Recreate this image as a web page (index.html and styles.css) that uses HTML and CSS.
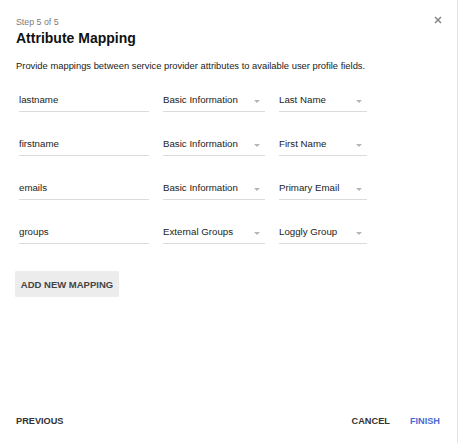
FILE: index.html
```html
<!DOCTYPE html>
<html>
<head>
<meta charset="utf-8">
<link rel="stylesheet" href="styles.css">
</head>
<body>
<div class="dialog">
  <div class="header">
    <div class="step">Step 5 of 5</div>
    <h1 class="title">Attribute Mapping</h1>
    <button class="close" aria-label="Close">
      <svg width="8" height="8" viewBox="0 0 8 8"><path d="M1 1L7 7M7 1L1 7" stroke="#858585" stroke-width="1.5" fill="none"/></svg>
    </button>
  </div>
  <p class="desc">Provide mappings between service provider attributes to available user profile fields.</p>
  <div class="rows">
    <div class="row">
      <div class="field input">lastname</div>
      <div class="field select s1">Basic Information<span class="arrow"></span></div>
      <div class="field select s2">Last Name<span class="arrow"></span></div>
    </div>
    <div class="row">
      <div class="field input">firstname</div>
      <div class="field select s1">Basic Information<span class="arrow"></span></div>
      <div class="field select s2">First Name<span class="arrow"></span></div>
    </div>
    <div class="row">
      <div class="field input">emails</div>
      <div class="field select s1">Basic Information<span class="arrow"></span></div>
      <div class="field select s2">Primary Email<span class="arrow"></span></div>
    </div>
    <div class="row">
      <div class="field input">groups</div>
      <div class="field select s1">External Groups<span class="arrow"></span></div>
      <div class="field select s2">Loggly Group<span class="arrow"></span></div>
    </div>
  </div>
  <button class="add">ADD NEW MAPPING</button>
  <div class="spacer"></div>
  <div class="footer">
    <button class="flat">PREVIOUS</button>
    <div class="right">
      <button class="flat">CANCEL</button>
      <button class="flat primary">FINISH</button>
    </div>
  </div>
</div>
</body>
</html>
```

FILE: styles.css
```css
html, body {
  margin: 0;
  padding: 0;
  background: #ffffff;
}
body {
  font-family: "Liberation Sans", Arial, sans-serif;
  color: #222;
}
.dialog {
  width: 457px;
  height: 443px;
  border-right: 1px solid #e2e2e2;
  display: flex;
  flex-direction: column;
  box-sizing: content-box;
}
.header {
  position: relative;
  padding: 16px 16px 0 16px;
}
.step {
  font-size: 8.8px;
  line-height: 12px;
  color: #7a7a7a;
}
.title {
  margin: 0;
  font-size: 14px;
  font-weight: bold;
  line-height: 20px;
  color: #111;
}
.close {
  position: absolute;
  top: 15px;
  right: 14px;
  width: 10px;
  height: 10px;
  padding: 0;
  border: 0;
  background: none;
  display: flex;
  align-items: center;
  justify-content: center;
}
.desc {
  margin: 11px 0 0 16px;
  font-size: 9.4px;
  line-height: 14px;
  color: #222;
}
.rows {
  display: flex;
  flex-direction: column;
  gap: 22px;
  margin-top: 17px;
  padding-left: 19px;
}
.row {
  display: flex;
  gap: 14px;
}
.field {
  position: relative;
  height: 22px;
  box-sizing: border-box;
  padding: 3px 0 4px;
  border-bottom: 1px solid #dcdcdc;
  font-size: 9.7px;
  line-height: 14px;
  color: #222;
  white-space: nowrap;
}
.input { width: 130px; }
.s1 { width: 102px; }
.s2 { width: 88px; }
.arrow {
  position: absolute;
  right: 5px;
  top: 10px;
  width: 0;
  height: 0;
  border-left: 3px solid transparent;
  border-right: 3px solid transparent;
  border-top: 3px solid #b5b5b5;
}
.add {
  align-self: flex-start;
  margin: 27px 0 0 15px;
  width: 104px;
  height: 26px;
  padding: 0;
  border: 0;
  border-radius: 1px;
  background: #ececec;
  font-family: inherit;
  font-size: 9.5px;
  font-weight: bold;
  color: #444;
}
.spacer { flex: 1; }
.footer {
  display: flex;
  justify-content: space-between;
  align-items: center;
  padding: 0 17px 15px 16px;
}
.right {
  display: flex;
  gap: 20px;
}
.flat {
  padding: 0;
  border: 0;
  background: none;
  font-family: inherit;
  font-size: 9.2px;
  font-weight: bold;
  line-height: 14px;
  color: #333;
}
.primary {
  color: #4a6cd4;
}
```
